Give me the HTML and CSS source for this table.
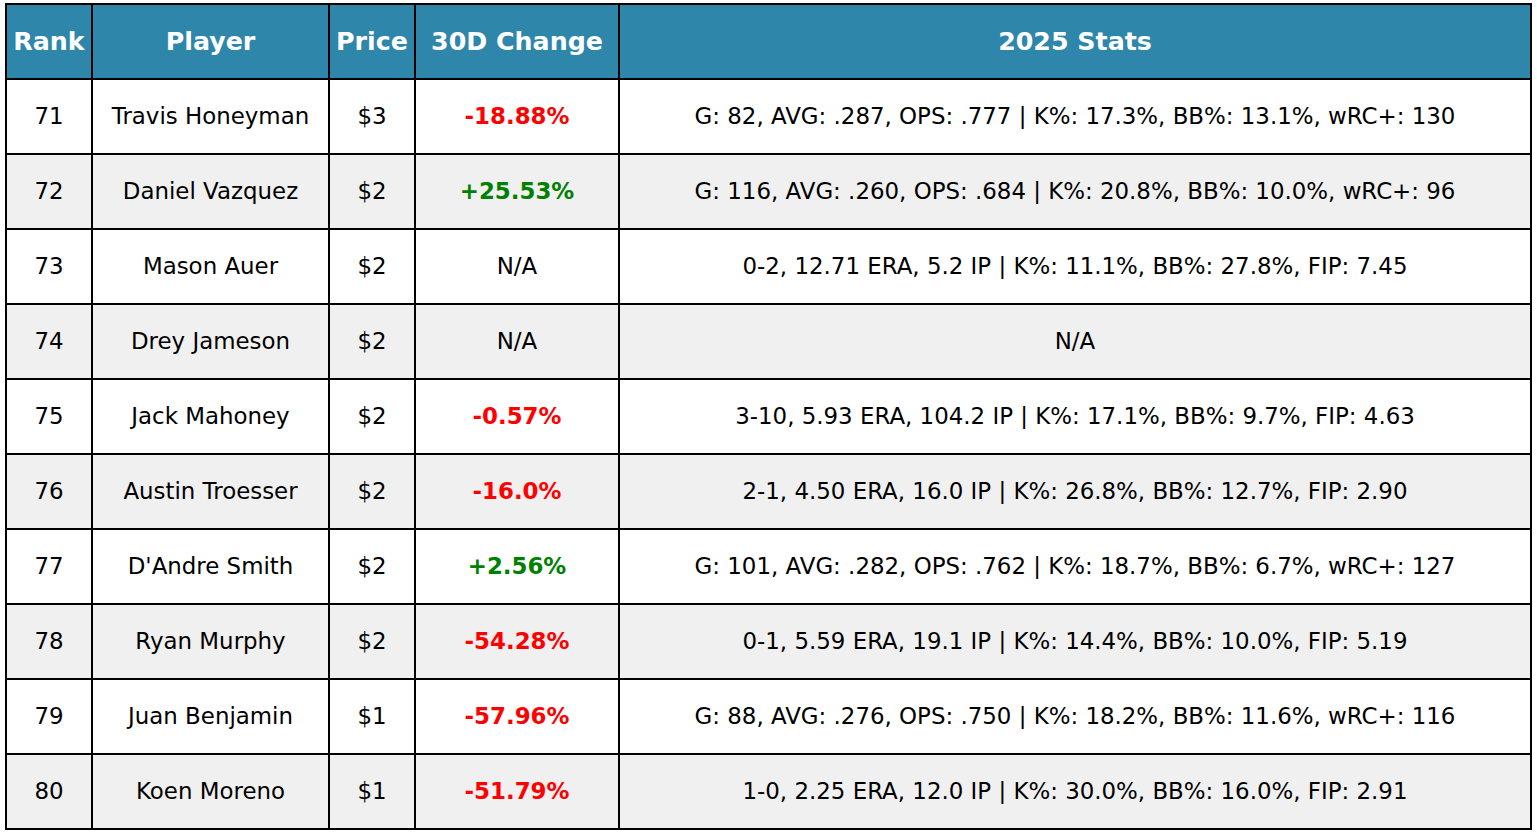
FILE: index.html
```html
<!DOCTYPE html>
<html>
<head>
<meta charset="utf-8">
<link rel="stylesheet" href="styles.css">
</head>
<body>
<table class="stats">
  <colgroup>
    <col class="c-rank"><col class="c-player"><col class="c-price"><col class="c-change"><col class="c-stats">
  </colgroup>
  <thead>
    <tr><th>Rank</th><th>Player</th><th>Price</th><th>30D Change</th><th>2025 Stats</th></tr>
  </thead>
  <tbody>
    <tr><td>71</td><td>Travis Honeyman</td><td>$3</td><td class="neg">-18.88%</td><td>G: 82, AVG: .287, OPS: .777 | K%: 17.3%, BB%: 13.1%, wRC+: 130</td></tr>
    <tr><td>72</td><td>Daniel Vazquez</td><td>$2</td><td class="pos">+25.53%</td><td>G: 116, AVG: .260, OPS: .684 | K%: 20.8%, BB%: 10.0%, wRC+: 96</td></tr>
    <tr><td>73</td><td>Mason Auer</td><td>$2</td><td>N/A</td><td>0-2, 12.71 ERA, 5.2 IP | K%: 11.1%, BB%: 27.8%, FIP: 7.45</td></tr>
    <tr><td>74</td><td>Drey Jameson</td><td>$2</td><td>N/A</td><td>N/A</td></tr>
    <tr><td>75</td><td>Jack Mahoney</td><td>$2</td><td class="neg">-0.57%</td><td>3-10, 5.93 ERA, 104.2 IP | K%: 17.1%, BB%: 9.7%, FIP: 4.63</td></tr>
    <tr><td>76</td><td>Austin Troesser</td><td>$2</td><td class="neg">-16.0%</td><td>2-1, 4.50 ERA, 16.0 IP | K%: 26.8%, BB%: 12.7%, FIP: 2.90</td></tr>
    <tr><td>77</td><td>D'Andre Smith</td><td>$2</td><td class="pos">+2.56%</td><td>G: 101, AVG: .282, OPS: .762 | K%: 18.7%, BB%: 6.7%, wRC+: 127</td></tr>
    <tr><td>78</td><td>Ryan Murphy</td><td>$2</td><td class="neg">-54.28%</td><td>0-1, 5.59 ERA, 19.1 IP | K%: 14.4%, BB%: 10.0%, FIP: 5.19</td></tr>
    <tr><td>79</td><td>Juan Benjamin</td><td>$1</td><td class="neg">-57.96%</td><td>G: 88, AVG: .276, OPS: .750 | K%: 18.2%, BB%: 11.6%, wRC+: 116</td></tr>
    <tr><td>80</td><td>Koen Moreno</td><td>$1</td><td class="neg">-51.79%</td><td>1-0, 2.25 ERA, 12.0 IP | K%: 30.0%, BB%: 16.0%, FIP: 2.91</td></tr>
  </tbody>
</table>
</body>
</html>
```
FILE: styles.css
```css
html, body {
  margin: 0;
  padding: 0;
  background: #ffffff;
}
body {
  padding: 3px 0 0 5px;
  font-family: "DejaVu Sans", sans-serif;
}
.stats {
  border-collapse: collapse;
  table-layout: fixed;
  width: 1525px;
}
.c-rank { width: 86px; }
.c-player { width: 237px; }
.c-price { width: 86px; }
.c-change { width: 204px; }
.c-stats { width: 912px; }
.stats th, .stats td {
  border: 2px solid #000;
  height: 73px;
  padding: 0;
  text-align: center;
  vertical-align: middle;
  white-space: nowrap;
}
.stats th {
  background: #2e86ab;
  color: #fff;
  font-weight: bold;
  font-size: 25.3px;
}
.stats td {
  height: 71px;
  padding-bottom: 2px;
  font-size: 22.9px;
  color: #000;
}
.stats tbody tr:nth-child(even) td {
  background: #f0f0f0;
}
.stats td.neg {
  color: #ff0000;
  font-weight: bold;
}
.stats td.pos {
  color: #008000;
  font-weight: bold;
}
```
